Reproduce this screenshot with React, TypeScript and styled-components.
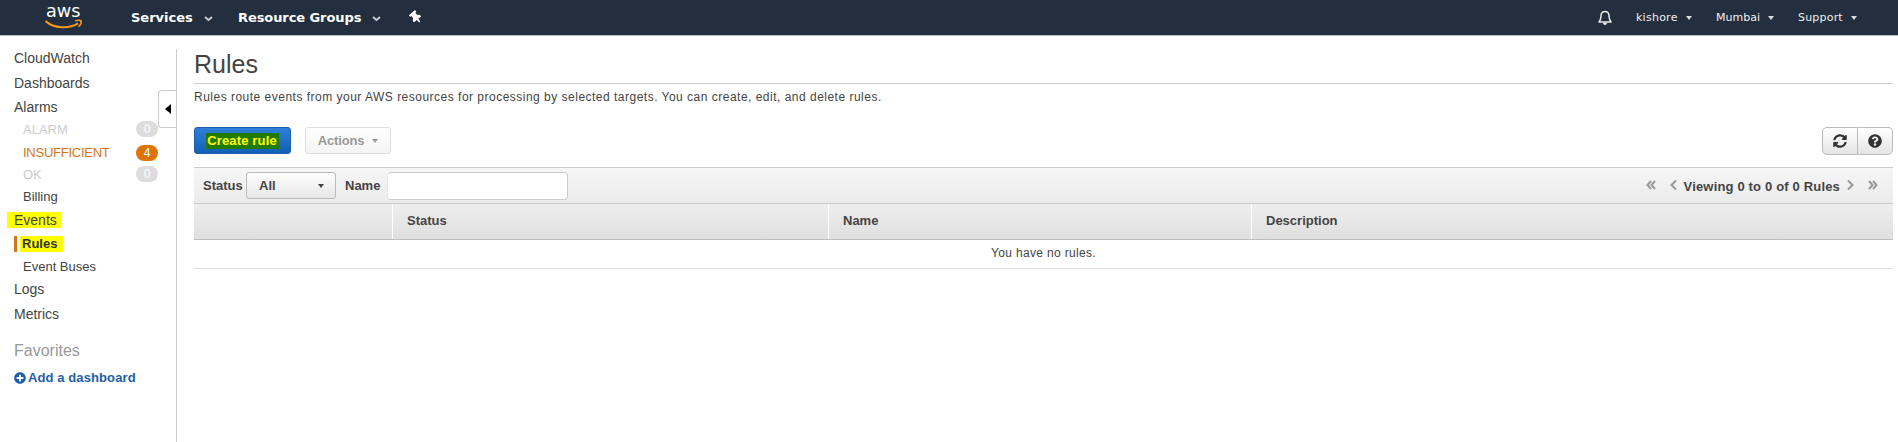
import React from "react";
import styled, { createGlobalStyle, css } from "styled-components";
import { FaSyncAlt, FaQuestionCircle, FaPlusCircle, FaThumbtack } from "react-icons/fa";

const Global = createGlobalStyle`
  * { box-sizing: border-box; }
  body { margin: 0; background: #fff; color: #444; font-family: "Liberation Sans", Arial, sans-serif; font-size: 13px; }
  button, input { font-family: inherit; }
`;

const Page = styled.div`
  height: 442px;
  display: flex;
  flex-direction: column;
  overflow: hidden;
`;

const TopNav = styled.header`
  height: 36px;
  flex: none;
  display: flex;
  align-items: center;
  padding: 0 40px 0 45px;
  background: #232f3e;
  border-bottom: 1px solid #b9bec3;
  color: #fff;
  font-family: "DejaVu Sans", Verdana, sans-serif;
`;

const Logo = styled.svg`
  width: 40px;
  height: 35px;
  flex: none;
  margin-right: 46px;
`;

const NavItem = styled.div<{ $width: number; $bold?: boolean; $track?: number }>`
  width: ${(p) => p.$width}px;
  flex: none;
  display: flex;
  align-items: center;
  white-space: nowrap;
  font-size: ${(p) => (p.$bold ? 13 : 11)}px;
  font-weight: ${(p) => (p.$bold ? 700 : 400)};
  letter-spacing: ${(p) => p.$track ?? 0}px;
  line-height: 34px;
  color: ${(p) => (p.$bold ? "#fff" : "#eee")};
`;

const Spacer = styled.div`
  flex: 1;
`;

const Pin = styled(FaThumbtack)`
  width: 10px;
  height: 13px;
  margin: 0 0 0 1px;
  transform: rotate(-40deg);
`;

const Chevron = styled.svg`
  width: 9px;
  height: 6px;
  margin: 2px 0 0 11px;
`;

const Caret = styled.span<{ $color?: string; $gap?: number }>`
  display: inline-block;
  border: solid transparent;
  border-width: 4px 3.5px 0;
  border-top-color: ${(p) => p.$color ?? "#ddd"};
  margin-left: ${(p) => p.$gap ?? 8}px;
`;

const Body = styled.div`
  flex: 1;
  display: flex;
  padding-top: 13px;
`;

const Sidebar = styled.nav`
  position: relative;
  width: 177px;
  flex: none;
  border-right: 1px solid #ccc;
  color: #444;
`;

const Item = styled.div<{ $h: number; $sub?: boolean; $tone?: string }>`
  height: ${(p) => p.$h}px;
  display: flex;
  align-items: center;
  padding: 0 18px 0 ${(p) => (p.$sub ? 23 : 14)}px;
  font-size: ${(p) => (p.$sub ? 13 : 14)}px;
  color: ${(p) => p.$tone ?? "#444"};
`;

const Narrow = styled.span`
  letter-spacing: -0.25px;
`;

const Count = styled.span<{ $active?: boolean }>`
  width: 22px;
  height: 16px;
  margin-left: auto;
  border-radius: 8px;
  background: ${(p) => (p.$active ? "#dd7408" : "#ddd")};
  color: #fff;
  font-size: 12px;
  line-height: 16px;
  text-align: center;
`;

const Marked = styled.span<{ $before: number; $after: number }>`
  background: #ff0;
  height: 16px;
  line-height: 16px;
  margin-left: -${(p) => p.$before}px;
  padding: 0 ${(p) => p.$after}px 0 ${(p) => p.$before}px;
`;

const Current = styled(Item)`
  padding-left: 14px;
  font-weight: 700;
  color: #333;
  &::before {
    content: "";
    width: 3px;
    height: 16px;
    margin-right: 5px;
    background: #d5761a;
  }
`;

const Favorites = styled.div`
  margin-top: 14px;
  padding-left: 14px;
  font-size: 16px;
  line-height: 22px;
  color: #999;
`;

const AddLink = styled.a`
  display: flex;
  align-items: center;
  gap: 2px;
  margin-top: 8px;
  padding-left: 14px;
  font-size: 13px;
  line-height: 16px;
  font-weight: 700;
  color: #1e5fa8;
  letter-spacing: 0.1px;
`;

const Collapse = styled.button`
  position: absolute;
  right: 0;
  top: 41px;
  width: 18px;
  height: 38px;
  padding: 0;
  display: flex;
  align-items: center;
  justify-content: center;
  background: #fff;
  border: 1px solid #ccc;
  border-right: 0;
  border-radius: 4px 0 0 4px;
  &::before {
    content: "";
    border: solid transparent;
    border-width: 5px 6px 5px 0;
    border-right-color: #000;
  }
`;

const Main = styled.main`
  flex: 1;
  padding: 0 5px 0 17px;
`;

const Title = styled.h1`
  height: 35px;
  margin: 0;
  border-bottom: 1px solid #ccc;
  font-size: 25px;
  font-weight: 400;
  line-height: 30px;
  color: #444;
`;

const Description = styled.p`
  margin: 5px 0 22px;
  font-size: 12px;
  line-height: 16px;
  letter-spacing: 0.49px;
`;

const Toolbar = styled.div`
  display: flex;
  height: 27px;
  margin-bottom: 13px;
`;

const buttonBase = css`
  display: flex;
  align-items: center;
  justify-content: center;
  height: 27px;
  padding: 0;
  font-size: 13px;
  font-weight: 700;
  border-radius: 3px;
`;

const Primary = styled.button`
  ${buttonBase}
  width: 97px;
  margin-right: 14px;
  border: 1px solid #1c5fae;
  background: linear-gradient(#2f7fd6, #1160b8);
  color: #ff0;
`;

const Highlight = styled.span`
  background: #237a00;
  line-height: 16px;
  padding: 0 2px 0 1px;
  white-space: nowrap;
  letter-spacing: 0.15px;
`;

const Disabled = styled.button`
  ${buttonBase}
  width: 86px;
  border: 1px solid #ddd;
  background: linear-gradient(#fff, #f4f4f4);
  color: #999;
  letter-spacing: -0.15px;
`;

const IconGroup = styled.div`
  display: flex;
  margin-left: auto;
`;

const IconButton = styled.button<{ $last?: boolean }>`
  ${buttonBase}
  width: ${(p) => (p.$last ? 35 : 36)}px;
  height: 28px;
  border: 1px solid #bbb;
  border-left-width: ${(p) => (p.$last ? 0 : 1)}px;
  border-radius: ${(p) => (p.$last ? "0 5px 5px 0" : "5px 0 0 5px")};
  background: linear-gradient(#fff, #e4e4e4);
  color: #333;
`;

const FilterBar = styled.div`
  display: flex;
  align-items: center;
  height: 37px;
  padding: 0 15px 0 9px;
  border: solid #ccc;
  border-width: 1px 0;
  background: linear-gradient(#f6f6f6, #ebebeb);
  font-weight: 700;
`;

const FilterLabel = styled.label<{ $width: number }>`
  width: ${(p) => p.$width}px;
`;

const Select = styled.button`
  ${buttonBase}
  justify-content: space-between;
  width: 90px;
  margin-right: 9px;
  padding: 0 11px 0 12px;
  border: 1px solid #bbb;
  background: linear-gradient(#fff, #e6e6e6);
  color: #444;
`;

const TextInput = styled.input`
  width: 181px;
  height: 28px;
  border: 1px solid #ccc;
  border-left-color: #e6e6e6;
  border-radius: 4px;
  background: #fff;
`;

const Pager = styled.div`
  display: flex;
  align-items: center;
  margin-left: auto;
  padding-top: 2px;
  letter-spacing: 0.17px;
`;

const PageArrow = styled.svg<{ $w: number; $m: string }>`
  width: ${(p) => p.$w}px;
  height: 10px;
  margin: ${(p) => p.$m};
  fill: none;
  stroke: #999;
  stroke-width: 2;
`;

const HeaderRow = styled.div`
  display: grid;
  grid-template-columns: 199px 436px 423px 1fr;
  height: 36px;
  border-bottom: 1px solid #bfbfbf;
  background: linear-gradient(#eee, #dfdfdf);
`;

const HeaderCell = styled.div`
  padding-left: 14px;
  border-right: 1px solid #fff;
  line-height: 33px;
  font-weight: 700;
  &:last-child { border-right: 0; }
`;

const EmptyRow = styled.div`
  height: 29px;
  border-bottom: 1px solid #ddd;
  font-size: 12px;
  line-height: 27px;
  text-align: center;
  letter-spacing: 0.33px;
`;

function NavChevron() {
  return (
    <Chevron viewBox="0 0 9 6">
      <path d="M1 1l3.500 3L8 1" fill="none" stroke="#ccc" strokeWidth="2" />
    </Chevron>
  );
}

export default function App() {
  return (
    <Page>
      <Global />
      <TopNav>
        <Logo viewBox="0 0 40 35">
          <text x="1" y="17.300" fill="#fff" fontFamily="DejaVu Sans, sans-serif" fontSize="18" textLength="34.500" lengthAdjust="spacingAndGlyphs">aws</text>
          <path d="M.5 21C9 28.600 24 29 33 23.300" fill="none" stroke="#f79a1c" strokeWidth="2" />
          <path d="M30 20.900c2.600-.9 5-.9 6.200-.1.300 1.500-.7 4.200-2.700 5.900" fill="none" stroke="#f79a1c" strokeWidth="1.500" />
        </Logo>
        <NavItem $width={107} $bold>Services<NavChevron /></NavItem>
        <NavItem $width={172} $bold $track={-0.08}>Resource Groups<NavChevron /></NavItem>
        <Pin />
        <Spacer />
        <NavItem $width={38}>
          <svg width="14" height="16" viewBox="0 0 14 16">
            <path d="M1 12c2-2 1.800-4 2-6.500C3.200 3 4.500 1.500 7 1.500S10.800 3 11 5.500c.2 2.500 0 4.500 2 6.500z" fill="none" stroke="#eee" strokeWidth="1.500" strokeLinejoin="round" />
            <path d="M5 13h4c-.3 2.500-3.700 2.500-4 0z" fill="#eee" />
          </svg>
        </NavItem>
        <NavItem $width={80} $track={0.25}>kishore<Caret /></NavItem>
        <NavItem $width={82}>Mumbai<Caret /></NavItem>
        <NavItem $width={60} $track={0.2}>Support<Caret /></NavItem>
      </TopNav>
      <Body>
        <Sidebar>
          <Item $h={18}>CloudWatch</Item>
          <Item $h={31}>Dashboards</Item>
          <Item $h={18}>Alarms</Item>
          <Item $h={26} $sub $tone="#ccc">ALARM<Count>0</Count></Item>
          <Item $h={21} $sub $tone="#d5761a"><Narrow>INSUFFICIENT</Narrow><Count $active>4</Count></Item>
          <Item $h={22} $sub $tone="#ccc">OK<Count>0</Count></Item>
          <Item $h={23} $sub>Billing</Item>
          <Item $h={24}><Marked $before={7} $after={4}>Events</Marked></Item>
          <Current $h={24} $sub><Marked $before={2} $after={6}>Rules</Marked></Current>
          <Item $h={21} $sub>Event Buses</Item>
          <Item $h={24}>Logs</Item>
          <Item $h={25}>Metrics</Item>
          <Favorites>Favorites</Favorites>
          <AddLink><FaPlusCircle size={12} />Add a dashboard</AddLink>
          <Collapse aria-label="Collapse" />
        </Sidebar>
        <Main>
          <Title>Rules</Title>
          <Description>Rules route events from your AWS resources for processing by selected targets. You can create, edit, and delete rules.</Description>
          <Toolbar>
            <Primary><Highlight>Create rule</Highlight></Primary>
            <Disabled>Actions<Caret $color="#999" /></Disabled>
            <IconGroup>
              <IconButton aria-label="Refresh"><FaSyncAlt size={14} /></IconButton>
              <IconButton aria-label="Help" $last><FaQuestionCircle size={14} /></IconButton>
            </IconGroup>
          </Toolbar>
          <FilterBar>
            <FilterLabel $width={43}>Status</FilterLabel>
            <Select>All<Caret $color="#444" /></Select>
            <FilterLabel $width={42}>Name</FilterLabel>
            <TextInput aria-label="Name" />
            <Pager>
              <PageArrow $w={10} $m="-4px 14px 0 0" viewBox="0 0 10 10"><path d="M5 1L1.500 5 5 9M9 1L5.500 5 9 9" /></PageArrow>
              <PageArrow $w={7} $m="-4px 7px 0 0" viewBox="0 0 7 10"><path d="M6 .5L1.500 5 6 9.500" /></PageArrow>
              Viewing 0 to 0 of 0 Rules
              <PageArrow $w={7} $m="-4px 14px 0 7px" viewBox="0 0 7 10"><path d="M1 .5L5.500 5 1 9.500" /></PageArrow>
              <PageArrow $w={10} $m="-4px 0 0 0" viewBox="0 0 10 10"><path d="M1 1l3.500 4L1 9M5 1l3.500 4L5 9" /></PageArrow>
            </Pager>
          </FilterBar>
          <HeaderRow>
            <HeaderCell />
            <HeaderCell>Status</HeaderCell>
            <HeaderCell>Name</HeaderCell>
            <HeaderCell>Description</HeaderCell>
          </HeaderRow>
          <EmptyRow>You have no rules.</EmptyRow>
        </Main>
      </Body>
    </Page>
  );
}
